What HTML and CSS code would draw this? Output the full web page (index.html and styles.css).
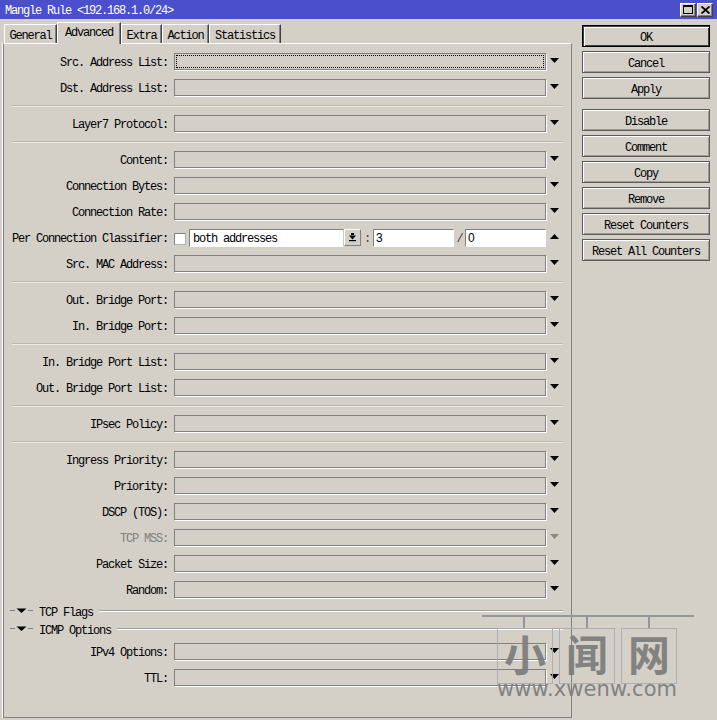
FILE: index.html
```html
<!DOCTYPE html>
<html>
<head>
<meta charset="utf-8">
<link rel="stylesheet" href="styles.css">
</head>
<body>
<div class="win">
  <div class="title">
    <span class="title-text">Mangle Rule &lt;192.168.1.0/24&gt;</span>
    <div class="tbtns">
      <div class="tb"><svg width="10" height="9" viewBox="0 0 10 9"><rect x="0.5" y="0.5" width="9" height="8" fill="none" stroke="#000"/><rect x="0" y="0" width="10" height="2" fill="#000"/></svg></div>
      <div class="tb"><svg width="9" height="8" viewBox="0 0 9 8"><path d="M0.5 0.5 L8.5 7.5 M8.5 0.5 L0.5 7.5" stroke="#000" stroke-width="1.8" fill="none"/></svg></div>
    </div>
  </div>
  <div class="main">
    <div class="left">
      <div class="tabs">
        <div class="tab w-gen">General</div>
        <div class="tab sel w-adv">Advanced</div>
        <div class="tab w-ext">Extra</div>
        <div class="tab w-act">Action</div>
        <div class="tab w-sta">Statistics</div>
      </div>
      <div class="panel">
        <div class="row"><span class="lbl">Src. Address List:</span><div class="box focus"></div><i class="arr"></i></div>
        <div class="row"><span class="lbl">Dst. Address List:</span><div class="box"></div><i class="arr"></i></div>
        <div class="sep"></div>
        <div class="row"><span class="lbl">Layer7 Protocol:</span><div class="box"></div><i class="arr"></i></div>
        <div class="sep"></div>
        <div class="row"><span class="lbl">Content:</span><div class="box"></div><i class="arr"></i></div>
        <div class="row"><span class="lbl">Connection Bytes:</span><div class="box"></div><i class="arr"></i></div>
        <div class="row"><span class="lbl">Connection Rate:</span><div class="box"></div><i class="arr"></i></div>
        <div class="row"><span class="lbl">Per Connection Classifier:</span>
          <div class="cb"></div>
          <div class="selbox">both addresses</div>
          <div class="ddbtn"><svg width="9" height="9" viewBox="0 0 9 9"><rect x="3" y="0" width="3" height="2" fill="#000"/><polygon points="1,2.5 8,2.5 4.5,6.5" fill="#000"/><rect x="1" y="7" width="7" height="1.2" fill="#000"/></svg></div>
          <span class="sym">:</span>
          <div class="in">3</div>
          <span class="sym slash">/</span>
          <div class="in">0</div>
          <i class="arr up"></i>
        </div>
        <div class="row"><span class="lbl">Src. MAC Address:</span><div class="box"></div><i class="arr"></i></div>
        <div class="sep"></div>
        <div class="row"><span class="lbl">Out. Bridge Port:</span><div class="box"></div><i class="arr"></i></div>
        <div class="row"><span class="lbl">In. Bridge Port:</span><div class="box"></div><i class="arr"></i></div>
        <div class="sep"></div>
        <div class="row"><span class="lbl">In. Bridge Port List:</span><div class="box"></div><i class="arr"></i></div>
        <div class="row"><span class="lbl">Out. Bridge Port List:</span><div class="box"></div><i class="arr"></i></div>
        <div class="sep"></div>
        <div class="row"><span class="lbl">IPsec Policy:</span><div class="box"></div><i class="arr"></i></div>
        <div class="sep"></div>
        <div class="row"><span class="lbl">Ingress Priority:</span><div class="box"></div><i class="arr"></i></div>
        <div class="row"><span class="lbl">Priority:</span><div class="box"></div><i class="arr"></i></div>
        <div class="row"><span class="lbl">DSCP (TOS):</span><div class="box"></div><i class="arr"></i></div>
        <div class="row"><span class="lbl dis">TCP MSS:</span><div class="box"></div><i class="arr dis"></i></div>
        <div class="row"><span class="lbl">Packet Size:</span><div class="box"></div><i class="arr"></i></div>
        <div class="row"><span class="lbl">Random:</span><div class="box"></div><i class="arr"></i></div>
        <div class="hdr">
          <svg class="hdr-ico" width="24" height="18" viewBox="0 0 24 18"><rect x="0" y="8" width="5" height="1" fill="#808080"/><polygon points="6.5,6.5 16.5,6.5 11.5,11" fill="#000"/><rect x="18" y="8" width="5" height="1" fill="#808080"/></svg>
          <span class="hdr-text">TCP Flags</span><div class="hline"></div>
        </div>
        <div class="hdr">
          <svg class="hdr-ico" width="24" height="18" viewBox="0 0 24 18"><rect x="0" y="8" width="5" height="1" fill="#808080"/><polygon points="6.5,6.5 16.5,6.5 11.5,11" fill="#000"/><rect x="18" y="8" width="5" height="1" fill="#808080"/></svg>
          <span class="hdr-text">ICMP Options</span><div class="hline"></div>
        </div>
        <div class="row"><span class="lbl">IPv4 Options:</span><div class="box"></div><i class="arr"></i></div>
        <div class="row"><span class="lbl">TTL:</span><div class="box"></div><i class="arr"></i></div>
      </div>
    </div>
    <div class="btns">
      <div class="btn def">OK</div>
      <div class="btn">Cancel</div>
      <div class="btn gap">Apply</div>
      <div class="btn">Disable</div>
      <div class="btn">Comment</div>
      <div class="btn">Copy</div>
      <div class="btn">Remove</div>
      <div class="btn">Reset Counters</div>
      <div class="btn">Reset All Counters</div>
    </div>
  </div>
  <div class="wm">
    <div class="wm-line"></div>
    <div class="wm-tick t1"></div>
    <div class="wm-tick t2"></div>
    <div class="wm-tick t3"></div>
    <div class="wm-box b1"><span class="wm-ch">小</span></div>
    <div class="wm-box b2"><span class="wm-ch">闻</span></div>
    <div class="wm-box b3"><span class="wm-ch">网</span></div>
    <div class="wm-url">www.xwenw.com</div>
  </div>
</div>
</body>
</html>
```

FILE: styles.css
```css
html, body {
  margin: 0;
  padding: 0;
}
body {
  width: 717px;
  height: 720px;
  overflow: hidden;
  background: #d4d0c8;
  font-family: "Liberation Mono", "DejaVu Sans Mono", monospace;
  font-size: 12px;
  letter-spacing: -1.2px;
  color: #000;
}
.win {
  position: relative;
  width: 717px;
  height: 720px;
}
.title {
  height: 19px;
  background: #4b4fcc;
  color: #fff;
  display: flex;
  align-items: center;
  padding: 0 4px 0 5px;
}
.title-text {
  white-space: nowrap;
  padding-top: 2px;
}
.tbtns {
  margin-left: auto;
  display: flex;
  gap: 1px;
}
.tb {
  width: 16px;
  height: 14px;
  box-sizing: border-box;
  background: #d4d0c8;
  border: 1px solid;
  border-color: #fff #404040 #404040 #fff;
  box-shadow: inset -1px -1px 0 #808080;
  display: flex;
  align-items: center;
  justify-content: center;
}
.main {
  display: flex;
  height: 701px;
}
.left {
  width: 572px;
  padding-left: 3px;
  box-sizing: border-box;
  display: flex;
  flex-direction: column;
}
.tabs {
  height: 24px;
  display: flex;
  align-items: flex-end;
  padding-left: 1px;
}
.tab {
  height: 19px;
  box-sizing: border-box;
  border-top: 1px solid #fff;
  border-left: 1px solid #fff;
  border-right: 1px solid #404040;
  box-shadow: inset -1px 0 0 #808080;
  display: flex;
  align-items: center;
  justify-content: center;
  padding-top: 3px;
  white-space: nowrap;
}
.tab.sel {
  height: 22px;
  margin-bottom: -1px;
  position: relative;
  z-index: 1;
  background: #d4d0c8;
  padding-top: 0;
  padding-bottom: 2px;
}
.w-gen { width: 53px; }
.w-adv { width: 64px; }
.w-ext { width: 41px; }
.w-act { width: 47px; }
.w-sta { width: 72px; }
.panel {
  height: 675px;
  box-sizing: border-box;
  border-top: 1px solid #fff;
  border-left: 1px solid #808080;
  border-right: 1px solid #808080;
  border-bottom: 1px solid #808080;
  box-shadow: -1px 0 0 #fff;
  padding-top: 9px;
}
.row {
  display: flex;
  align-items: center;
  height: 17px;
  margin-bottom: 9px;
}
.lbl {
  width: 164px;
  flex: none;
  text-align: right;
  white-space: nowrap;
  padding-top: 3px;
}
.lbl.dis {
  color: #808080;
}
.box {
  width: 372px;
  height: 17px;
  flex: none;
  box-sizing: border-box;
  border: 1px solid #808080;
  box-shadow: 1px 1px 0 #fff;
  margin-left: 6px;
}
.box.focus {
  outline: 1px dotted #000;
  outline-offset: -3px;
}
.arr {
  display: block;
  width: 9px;
  height: 5px;
  flex: none;
  margin-left: 4px;
  align-self: flex-start;
  margin-top: 5px;
  background: #000;
  clip-path: polygon(0 0, 100% 0, 50% 100%);
}
.arr.up {
  clip-path: polygon(50% 0, 100% 100%, 0 100%);
}
.arr.dis {
  background: #8a8a8a;
}
.sep {
  height: 1px;
  background: #bcb8b0;
  border-bottom: 1px solid #ecebe7;
  margin: 0 8px 8px 8px;
}
.cb {
  width: 12px;
  height: 12px;
  flex: none;
  box-sizing: border-box;
  background: #fff;
  border: 1px solid;
  border-color: #808080 #b0b0b0 #b0b0b0 #808080;
  margin-left: 6px;
  margin-top: 2px;
}
.selbox {
  width: 155px;
  height: 18px;
  flex: none;
  box-sizing: border-box;
  margin-left: 3px;
  background: #fff;
  border: 1px solid;
  border-color: #808080 #c8c8c8 #fff #808080;
  padding: 1px 0 0 3px;
  line-height: 16px;
  white-space: nowrap;
}
.ddbtn {
  width: 17px;
  height: 17px;
  flex: none;
  box-sizing: border-box;
  background: #d4d0c8;
  border: 1px solid;
  border-color: #fff #808080 #808080 #fff;
  display: flex;
  align-items: center;
  justify-content: center;
}
.sym {
  width: 12px;
  flex: none;
  text-align: center;
  color: #404040;
  padding-top: 2px;
}
.sym.slash {
  width: 11px;
}
.in {
  width: 81px;
  height: 18px;
  flex: none;
  box-sizing: border-box;
  background: #fff;
  border: 1px solid;
  border-color: #808080 #fff #fff #808080;
  font-family: "Liberation Sans", Arial, sans-serif;
  font-size: 12px;
  letter-spacing: 0;
  padding-left: 2px;
  line-height: 16px;
}
.hdr {
  display: flex;
  align-items: center;
  height: 18px;
  margin-top: -5px;
  padding-left: 6px;
  padding-right: 8px;
}
.hdr + .hdr {
  margin-top: 0;
}
.hdr + .row {
  margin-top: 5px;
}
.hdr-ico {
  flex: none;
}
.hdr-text {
  margin-left: 5px;
  white-space: nowrap;
  padding-top: 3px;
}
.hline {
  flex: 1;
  height: 0;
  border-top: 1px solid #a0a0a0;
  border-bottom: 1px solid #fff;
  margin-left: 6px;
}
.btns {
  margin-left: 10px;
  width: 128px;
  padding-top: 6px;
  display: flex;
  flex-direction: column;
}
.btn {
  height: 22px;
  flex: none;
  box-sizing: border-box;
  margin-bottom: 4px;
  border: 1px solid #5a5a5a;
  box-shadow: inset 1px 1px 0 #fff, inset -1px -1px 0 #a09c94;
  display: flex;
  align-items: center;
  justify-content: center;
  white-space: nowrap;
  padding-top: 3px;
}
.btn.def {
  border-color: #000;
  box-shadow: inset 1px 1px 0 #404040, inset 2px 2px 0 #fff, inset -1px -1px 0 #404040;
}
.btn.gap {
  margin-bottom: 10px;
}
.wm {
  position: absolute;
  left: 482px;
  top: 615px;
  width: 212px;
  height: 90px;
  opacity: 0.92;
}
.wm-line {
  position: absolute;
  left: 0;
  top: 0;
  width: 212px;
  height: 2px;
  background: #8e9398;
}
.wm-tick {
  position: absolute;
  top: 2px;
  width: 2px;
  height: 11px;
  background: #8e9398;
}
.t1 { left: 41px; }
.t2 { left: 104px; }
.t3 { left: 166px; }
.wm-box {
  position: absolute;
  top: 13px;
  width: 56px;
  height: 56px;
  box-sizing: border-box;
  border: 1px solid #a8aeb4;
  display: flex;
  align-items: center;
  justify-content: center;
}
.wm-ch {
  font-family: "Noto Sans CJK SC", sans-serif;
  font-size: 42px;
  font-weight: 700;
  letter-spacing: 0;
  color: #7c7c7c;
  line-height: 42px;
  margin-top: -6px;
}
.b1 { left: 15px; }
.b2 { left: 77px; }
.b3 { left: 139px; }
.wm-url {
  position: absolute;
  left: 15px;
  top: 64px;
  font-family: "DejaVu Sans", sans-serif;
  font-size: 21px;
  line-height: 21px;
  letter-spacing: 0.1px;
  color: #7c7c7c;
  white-space: nowrap;
}
```
